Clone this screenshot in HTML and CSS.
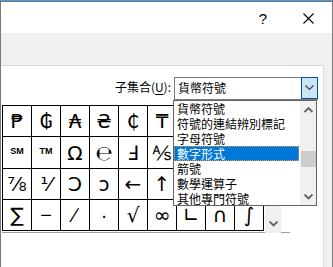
FILE: index.html
```html
<!DOCTYPE html>
<html lang="zh-Hant">
<head>
    <meta charset="UTF-8">
    <title>符號</title>
    <link rel="stylesheet" href="styles.css">
</head>
<body>
    <div class="window">
        <div class="titlebar">
            <span class="help">?</span>
            <span class="close">
                <svg width="11" height="11" viewBox="0 0 11 11"><path d="M0.5 0.5 L10.5 10.5 M10.5 0.5 L0.5 10.5" stroke="#000" stroke-width="1.1" fill="none"/></svg>
            </span>
        </div>
        <div class="toolbar"></div>
        <div class="body">
            <div class="panel">
                <div class="subset-row">
                    <label class="subset-label">子集合(<u>U</u>):</label>
                    <div class="combo">
                        <span class="combo-text">貨幣符號</span>
                        <span class="combo-btn">
                            <svg width="9" height="6" viewBox="0 0 9 6"><path d="M0.5 0.5 L4.5 4.5 L8.5 0.5" stroke="#444" stroke-width="1.2" fill="none"/></svg>
                        </span>
                    </div>
                </div>
                <div class="charbox">
                    <div class="grid">
                        <div class="cell">₱</div><div class="cell">₲</div><div class="cell">₳</div>
                        <div class="cell">₴</div><div class="cell">₵</div><div class="cell">₸</div>
                        <div class="cell"></div><div class="cell"></div><div class="cell"></div>

                        <div class="cell small">SM</div><div class="cell small">TM</div><div class="cell">Ω</div>
                        <div class="cell">℮</div><div class="cell">Ⅎ</div><div class="cell">⅍</div>
                        <div class="cell"></div><div class="cell"></div><div class="cell"></div>

                        <div class="cell">⅞</div><div class="cell">⅟</div><div class="cell">Ↄ</div>
                        <div class="cell">ↄ</div><div class="cell">←</div><div class="cell">↑</div>
                        <div class="cell"></div><div class="cell"></div><div class="cell"></div>

                        <div class="cell">∑</div><div class="cell thin">−</div><div class="cell thin">∕</div>
                        <div class="cell thin">·</div><div class="cell">√</div><div class="cell">∞</div>
                        <div class="cell">∟</div><div class="cell">∩</div><div class="cell">∫</div>
                    </div>
                    <div class="vscroll">
                        <svg width="9" height="6" viewBox="0 0 9 6"><path d="M0.5 0.5 L4.5 4.5 L8.5 0.5" stroke="#606060" stroke-width="1.8" fill="none"/></svg>
                    </div>
                </div>

                <div class="droplist">
                    <ul class="items">
                        <li>貨幣符號</li>
                        <li>符號的連結辨別標記</li>
                        <li>字母符號</li>
                        <li class="selected">數字形式</li>
                        <li>箭號</li>
                        <li>數學運算子</li>
                        <li>其他專門符號</li>
                    </ul>
                    <div class="list-scroll">
                        <span class="arrow">
                            <svg width="9" height="6" viewBox="0 0 9 6"><path d="M0.5 5 L4.5 1 L8.5 5" stroke="#606060" stroke-width="1.8" fill="none"/></svg>
                        </span>
                        <span class="thumb"></span>
                        <span class="arrow">
                            <svg width="9" height="6" viewBox="0 0 9 6"><path d="M0.5 0.5 L4.5 4.5 L8.5 0.5" stroke="#606060" stroke-width="1.8" fill="none"/></svg>
                        </span>
                    </div>
                </div>
            </div>
            <div class="side"></div>
        </div>
    </div>
</body>
</html>
```

FILE: styles.css
```css
body {
    margin: 0;
    width: 333px;
    height: 267px;
    overflow: hidden;
    background: #fff;
    font-family: "Noto Sans CJK TC", "Noto Sans", sans-serif;
    font-size: 12px;
    color: #000;
}

.window {
    height: 266px;
    border-top: 1px solid #8a8a8a;
    border-left: 1px solid #7a7a7a;
    border-right: 1px solid #7a7a7a;
    display: flex;
    flex-direction: column;
}

.titlebar {
    height: 31px;
    border-top: 1px solid #2b88d8;
    background: #fff;
    display: flex;
    align-items: center;
    justify-content: flex-end;
}

.help {
    font-family: "Liberation Sans", sans-serif;
    font-size: 15px;
    margin-right: 36px;
    margin-top: 1px;
}

.close {
    display: flex;
    margin-right: 18px;
    margin-top: 1px;
}

.toolbar {
    height: 32px;
    background: #f0f0f0;
}

.body {
    flex: 1;
    display: flex;
    background: #f0f0f0;
}

.panel {
    position: relative;
    width: 322px;
    background: #fff;
    border-top: 1px solid #dadada;
    border-right: 1px solid #dadada;
}

.side {
    flex: 1;
}

.subset-row {
    height: 39px;
    display: flex;
    justify-content: flex-end;
    align-items: flex-start;
    padding-right: 5px;
    box-sizing: border-box;
}

.subset-label {
    margin-top: 14px;
    margin-right: 3px;
    line-height: 14px;
}

.subset-label u {
    text-underline-offset: 2px;
}

.combo {
    margin-top: 11px;
    width: 144px;
    height: 23px;
    box-sizing: border-box;
    border: 1px solid #7a7a7a;
    border-right: none;
    display: flex;
    align-items: stretch;
}

.combo-text {
    flex: 1;
    padding-left: 3px;
    line-height: 20px;
}

.combo-btn {
    width: 17px;
    box-sizing: border-box;
    background: #cce4f7;
    border: 1px solid #005499;
    margin-top: -1px;
    display: flex;
    align-items: center;
    justify-content: center;
}

.charbox {
    display: flex;
    margin-left: 1px;
    width: 288px;
    padding-bottom: 1px;
    border-bottom: 1px solid #a0a0a0;
}

.grid {
    display: grid;
    grid-template-columns: repeat(9, 29px);
    grid-template-rows: 31px 32px 31px 31px;
    border-top: 1px solid #000;
    border-left: 1px solid #000;
    font-family: "DejaVu Sans", sans-serif;
    font-size: 20px;
}

.cell {
    border-right: 1px solid #000;
    border-bottom: 1px solid #000;
    display: flex;
    align-items: center;
    justify-content: center;
}

.cell.small {
    font-family: "Liberation Sans", sans-serif;
    font-size: 9px;
    font-weight: bold;
    padding-bottom: 3px;
}

.cell.thin {
    font-family: "Liberation Sans", sans-serif;
}

.vscroll {
    width: 16px;
    margin-left: 1px;
    background: #f0f0f0;
    display: flex;
    align-items: flex-end;
    justify-content: center;
    padding-bottom: 6px;
    box-sizing: border-box;
    margin-bottom: -2px;
}

.droplist {
    position: absolute;
    left: 172px;
    top: 34px;
    width: 144px;
    height: 106px;
    box-sizing: border-box;
    border: 1px solid #646464;
    background: #fff;
    display: flex;
}

.items {
    list-style: none;
    margin: 0;
    padding: 0;
    flex: 1;
}

.items li {
    height: 15px;
    line-height: 15px;
    padding-left: 3px;
    white-space: nowrap;
}

.items li.selected {
    background: #0078d7;
    color: #fff;
    outline: 1px dotted #f0a030;
    outline-offset: -1px;
    margin-right: 1px;
}

.list-scroll {
    width: 16px;
    background: #f0f0f0;
    display: flex;
    flex-direction: column;
    align-items: center;
}

.list-scroll .arrow {
    height: 17px;
    display: flex;
    align-items: center;
}

.list-scroll .thumb {
    width: 15px;
    height: 16px;
    margin-top: 33px;
    margin-bottom: auto;
    background: #cdcdcd;
}
```
